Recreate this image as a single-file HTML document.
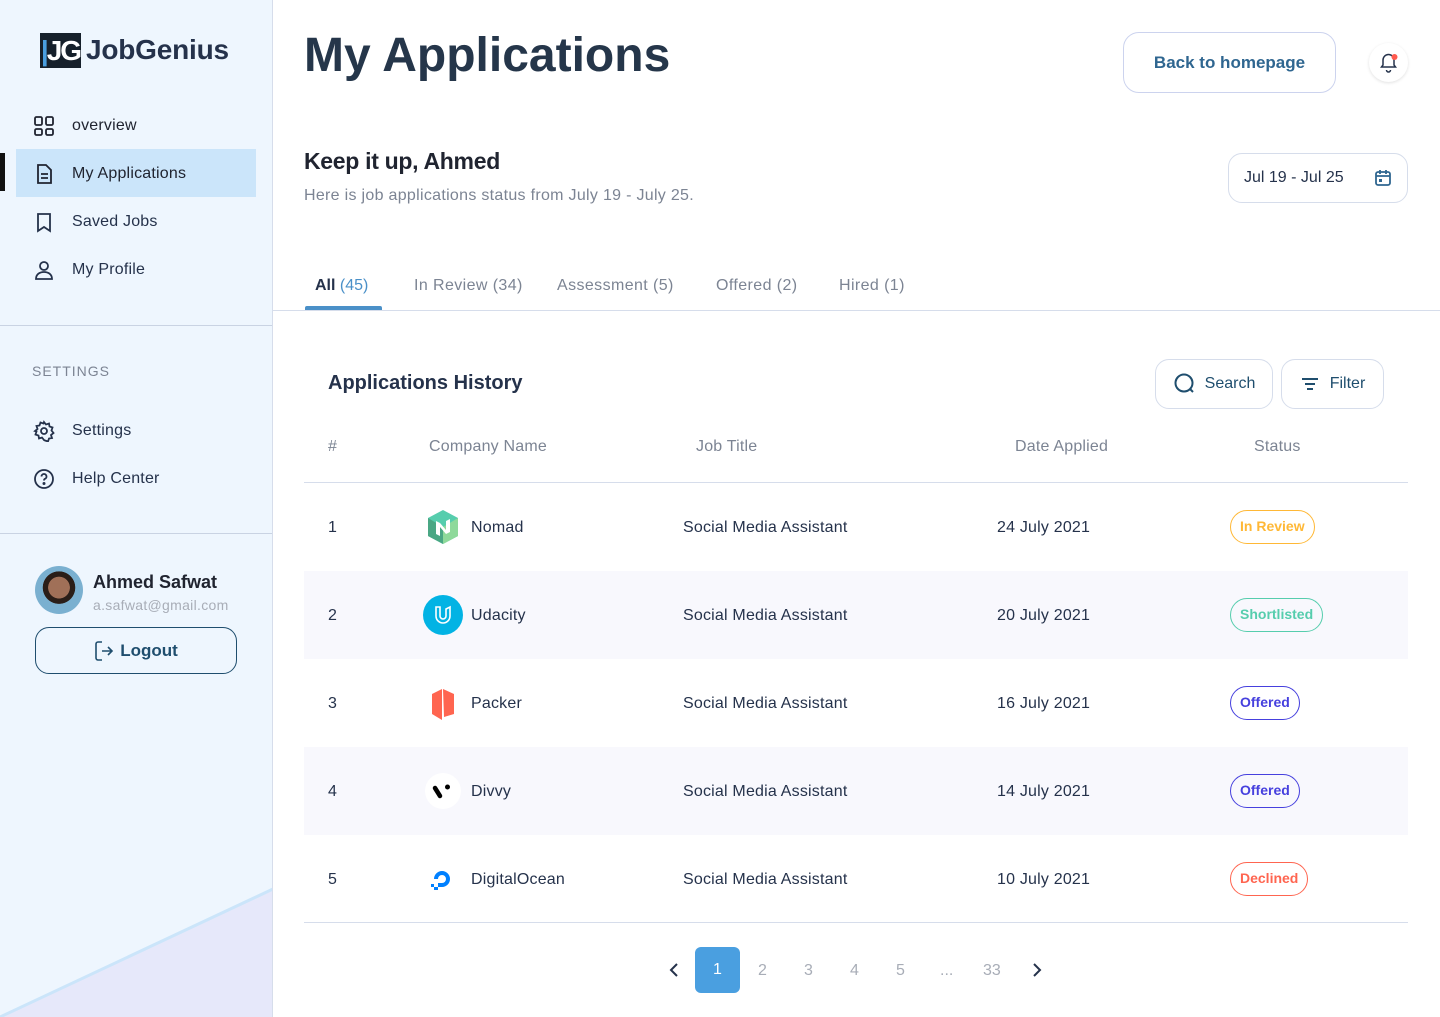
<!DOCTYPE html>
<html><head><meta charset="utf-8"><style>
*{margin:0;padding:0;box-sizing:border-box}
body{width:1440px;height:1017px;position:relative;overflow:hidden;background:#fff;font-family:"Liberation Sans",sans-serif;color:#25324b}
.a{position:absolute}
.side{left:0;top:0;width:273px;height:1017px;background:#eef6fe;border-right:1px solid #d6ddeb;overflow:hidden}
.nav{font-size:16px;color:#202430;display:flex;align-items:center;gap:17px;letter-spacing:0.2px}
.nav svg{width:22px;height:22px}
.hl{position:absolute;left:304px;width:1104px;height:88px;background:#f8f8fd}
.row{position:absolute;left:304px;width:1104px;height:88px;font-size:16px;color:#25324b;letter-spacing:0.2px}
.row span{position:absolute;top:36px}
.badge{position:absolute;top:27px;height:34px;border:1.5px solid;border-radius:17px;font-size:14px;font-weight:bold;padding:0 9px;line-height:31px;letter-spacing:0}
.th{position:absolute;top:438px;font-size:16px;color:#7c8493;letter-spacing:0.2px}
.pg{position:absolute;top:962px;font-size:16px;color:#a8adb7}
.tab{position:absolute;top:277px;font-size:16px;color:#7c8493;letter-spacing:0.4px}
</style></head><body>
<div class="a side">
  <div class="a" style="left:40px;top:33px;width:41px;height:35px;background:#16202b;color:#fff;font-weight:bold;font-size:28px;line-height:35px;text-align:center;letter-spacing:-2px"><span style="color:#4a9fe0">|</span>JG</div>
  <div class="a" style="left:86px;top:34px;font-size:28px;font-weight:bold;color:#25324b;letter-spacing:-0.2px">JobGenius</div>
  <div class="a" style="left:0;top:153px;width:5px;height:38px;background:#111"></div>
  <div class="a" style="left:16px;top:149px;width:240px;height:48px;background:#cbe5fa"></div>
  <div class="a nav" style="left:33px;top:115px"><svg viewBox="0 0 22 22" fill="none" stroke="#202430" stroke-width="1.8"><rect x="2" y="2" width="7" height="8" rx="1.5"/><rect x="13" y="2" width="7" height="8" rx="1.5"/><rect x="2" y="14" width="7" height="6" rx="1.5"/><rect x="13" y="14" width="7" height="6" rx="1.5"/></svg>overview</div>
  <div class="a nav" style="left:33px;top:163px"><svg viewBox="0 0 22 22" fill="none" stroke="#202430" stroke-width="1.8"><path d="M5 2h8l5 5v13H5z"/><path d="M8 11h7M8 15h7"/></svg>My Applications</div>
  <div class="a nav" style="left:33px;top:211px;color:#25324b"><svg viewBox="0 0 22 22" fill="none" stroke="#25324b" stroke-width="1.8"><path d="M5 3h12v17l-6-4-6 4z"/></svg>Saved Jobs</div>
  <div class="a nav" style="left:33px;top:259px;color:#25324b"><svg viewBox="0 0 22 22" fill="none" stroke="#25324b" stroke-width="1.8"><circle cx="11" cy="7" r="4"/><path d="M3 20c0-5 4-7 8-7s8 2 8 7z"/></svg>My Profile</div>
  <div class="a" style="left:0;top:325px;width:273px;height:1px;background:#c9d3e3"></div>
  <div class="a" style="left:32px;top:363px;font-size:14px;color:#7c8493;letter-spacing:1px">SETTINGS</div>
  <div class="a nav" style="left:33px;top:420px;color:#25324b"><svg viewBox="0 0 22 22" fill="none" stroke="#25324b" stroke-width="1.8"><circle cx="11" cy="11" r="3"/><path d="M11 2l2 2.5 3-1 .5 3 3 1-1 3 2 2.5-2.5 2 1 3-3 .5-1 3-3-1L11 20l-2-2.5-3 1-.5-3-3-1 1-3L2 11l2.5-2-1-3 3-.5 1-3 3 1z"/></svg>Settings</div>
  <div class="a nav" style="left:33px;top:468px;color:#25324b"><svg viewBox="0 0 22 22" fill="none" stroke="#25324b" stroke-width="1.8"><circle cx="11" cy="11" r="9"/><path d="M8.5 8.5a2.5 2.5 0 1 1 3.5 2.3c-.7.3-1 .8-1 1.7"/><circle cx="11" cy="15.5" r=".6" fill="#25324b"/></svg>Help Center</div>
  <div class="a" style="left:0;top:533px;width:273px;height:1px;background:#c9d3e3"></div>
  <div class="a" style="left:35px;top:566px;width:48px;height:48px;border-radius:50%;background:radial-gradient(circle at 50% 45%,#a07058 0 30%,#2a1e18 31% 45%,#7ab0d0 46%)"></div>
  <div class="a" style="left:93px;top:572px;font-size:18px;font-weight:bold;color:#202430">Ahmed Safwat</div>
  <div class="a" style="left:93px;top:597px;font-size:14px;color:#a8adb7;letter-spacing:0.3px">a.safwat@gmail.com</div>
  <div class="a" style="left:35px;top:627px;width:202px;height:47px;border:1.5px solid #1f4e6e;border-radius:14px;display:flex;align-items:center;justify-content:center;gap:6px;font-weight:bold;font-size:17px;color:#1f4e6e"><svg width="20" height="22" viewBox="0 0 20 22" fill="none" stroke="#1f4e6e" stroke-width="1.6"><path d="M8 2H4a2 2 0 0 0-2 2v14a2 2 0 0 0 2 2h4"/><path d="M8 11h10M14 7l4 4-4 4"/></svg>Logout</div>
  <svg class="a" style="left:0;top:880px" width="273" height="137"><polygon points="0,137 273,9 273,137" fill="#e6e8fa"/><line x1="0" y1="137" x2="273" y2="9" stroke="#cbe5fa" stroke-width="3"/></svg>
</div>

<div class="a" style="left:304px;top:28px;font-size:48px;font-weight:bold;color:#25364a;letter-spacing:0px">My Applications</div>
<div class="a" style="left:1123px;top:32px;width:213px;height:61px;border:1px solid #ccd3ee;border-radius:16px;text-align:center;line-height:59px;font-weight:bold;font-size:17px;color:#2f6690">Back to homepage</div>
<div class="a" style="left:1369px;top:43px;width:39px;height:39px;border-radius:50%;box-shadow:0 1px 3px rgba(0,0,0,.12)"><svg width="39" height="39" viewBox="0 0 39 39" fill="none" stroke="#25324b" stroke-width="1.5"><path d="M12.5 24h14l-1.5-2v-5a5.5 5.5 0 0 0-11 0v5z"/><path d="M17.5 27a2 2 0 0 0 4 0"/><circle cx="25.5" cy="14" r="3" fill="#ff5a4f" stroke="none"/></svg></div>
<div class="a" style="left:304px;top:148px;font-size:23px;font-weight:bold;color:#202430;letter-spacing:-0.3px">Keep it up, Ahmed</div>
<div class="a" style="left:304px;top:187px;font-size:16px;color:#7c8493;letter-spacing:0.3px">Here is job applications status from July 19 - July 25.</div>
<div class="a" style="left:1228px;top:153px;width:180px;height:50px;border:1px solid #d6ddeb;border-radius:14px"><span class="a" style="left:15px;top:15px;font-size:16px;color:#25324b">Jul 19 - Jul 25</span><svg class="a" style="left:144px;top:14px" width="20" height="20" viewBox="0 0 20 20" fill="none" stroke="#2f6690" stroke-width="1.8"><rect x="3" y="4" width="14" height="13" rx="2"/><path d="M3 8h14M7 2v4M13 2v4"/><rect x="6" y="11" width="3" height="3" fill="#2f6690" stroke="none"/></svg></div>

<div class="tab" style="left:315px;font-weight:bold;color:#25324b;letter-spacing:0">All <span style="color:#4a90c8;font-weight:normal">(45)</span></div>
<div class="tab" style="left:414px">In Review (34)</div>
<div class="tab" style="left:557px">Assessment (5)</div>
<div class="tab" style="left:716px">Offered (2)</div>
<div class="tab" style="left:839px">Hired (1)</div>
<div class="a" style="left:273px;top:310px;width:1167px;height:1px;background:#d6ddeb"></div>
<div class="a" style="left:305px;top:306px;width:77px;height:4px;background:#4a90c8;border-radius:2px 2px 0 0"></div>

<div class="a" style="left:328px;top:372px;font-size:20px;font-weight:bold;color:#25324b">Applications History</div>
<div class="a" style="left:1155px;top:359px;width:118px;height:50px;border:1px solid #d6ddeb;border-radius:14px;display:flex;align-items:center;justify-content:center;gap:8px;font-size:16px;color:#1f4e6e"><svg width="24" height="24" viewBox="0 0 24 24" fill="none" stroke="#1f4e6e" stroke-width="2"><circle cx="11" cy="11" r="8.5"/><path d="M17 17l3 3"/></svg>Search</div>
<div class="a" style="left:1281px;top:359px;width:103px;height:50px;border:1px solid #d6ddeb;border-radius:14px;display:flex;align-items:center;justify-content:center;gap:10px;font-size:16px;color:#1f4e6e"><svg width="20" height="20" viewBox="0 0 20 20" stroke="#1f4e6e" stroke-width="2"><path d="M2 5h16M5 10h10M7 15h6"/></svg>Filter</div>

<div class="th" style="left:328px">#</div>
<div class="th" style="left:429px">Company Name</div>
<div class="th" style="left:696px">Job Title</div>
<div class="th" style="left:1015px">Date Applied</div>
<div class="th" style="left:1254px">Status</div>
<div class="a" style="left:304px;top:482px;width:1104px;height:1px;background:#d6ddeb"></div>

<div class="row" style="top:483px"><span style="left:24px">1</span><svg class="a" style="left:122px;top:26px" width="34" height="36" viewBox="0 0 34 36"><polygon points="17,1 32,9 32,27 17,35 2,27 2,9" fill="#56cdad"/><polygon points="17,18 32,9 32,27 17,35" fill="#8ed99a"/><polygon points="2,9 17,18 17,35 2,27" fill="#4aa784"/><path d="M10 25V12l4 2 6 7V12l4-2v13l-4 2-6-7v9z" fill="#fff"/></svg><span style="left:167px">Nomad</span><span style="left:379px">Social Media Assistant</span><span style="left:693px">24 July 2021</span><div class="badge" style="left:926px;color:#ffb836;border-color:#ffb836">In Review</div></div>
<div class="hl" style="top:571px"></div>
<div class="row" style="top:571px"><span style="left:24px">2</span><div class="a" style="left:119px;top:24px;width:40px;height:40px;border-radius:50%;background:#02b3e4"><svg width="40" height="40" viewBox="0 0 40 40" fill="none" stroke="#fff" stroke-width="1.6"><path d="M13 12v9a7 7 0 0 0 14 0v-9l-4 2v7a3 3 0 0 1-6 0v-9z"/></svg></div><span style="left:167px">Udacity</span><span style="left:379px">Social Media Assistant</span><span style="left:693px">20 July 2021</span><div class="badge" style="left:926px;color:#56cdad;border-color:#56cdad">Shortlisted</div></div>
<div class="row" style="top:659px"><span style="left:24px">3</span><svg class="a" style="left:126px;top:28px" width="26" height="34" viewBox="0 0 26 34"><polygon points="2,7 12,2 12,33 2,27" fill="#ff6550"/><polygon points="13,2 24,7 24,27 14,30" fill="#ff6550"/></svg><span style="left:167px">Packer</span><span style="left:379px">Social Media Assistant</span><span style="left:693px">16 July 2021</span><div class="badge" style="left:926px;color:#4640de;border-color:#4640de">Offered</div></div>
<div class="hl" style="top:747px"></div>
<div class="row" style="top:747px"><span style="left:24px">4</span><div class="a" style="left:121px;top:26px;width:36px;height:36px;border-radius:50%;background:#fff"><svg width="36" height="36" viewBox="0 0 36 36"><path d="M10 15l5 8" stroke="#000" stroke-width="4.5" stroke-linecap="round"/><circle cx="22.5" cy="14" r="2.5" fill="#000"/></svg></div><span style="left:167px">Divvy</span><span style="left:379px">Social Media Assistant</span><span style="left:693px">14 July 2021</span><div class="badge" style="left:926px;color:#4640de;border-color:#4640de">Offered</div></div>
<div class="row" style="top:835px"><span style="left:24px">5</span><svg class="a" style="left:124px;top:30px" width="30" height="28" viewBox="0 0 30 28"><path d="M14 22a8 8 0 1 0-8-8h4a4 4 0 1 1 4 4z" fill="#0080ff"/><rect x="10" y="18" width="4" height="4" fill="#0080ff"/><rect x="6" y="22" width="4" height="3" fill="#0080ff"/><rect x="3" y="19" width="3" height="3" fill="#0080ff"/></svg><span style="left:167px">DigitalOcean</span><span style="left:379px">Social Media Assistant</span><span style="left:693px">10 July 2021</span><div class="badge" style="left:926px;color:#ff6550;border-color:#ff6550">Declined</div></div>
<div class="a" style="left:304px;top:922px;width:1104px;height:1px;background:#d6ddeb"></div>

<svg class="a" style="left:668px;top:962px" width="12" height="16" viewBox="0 0 12 16" fill="none" stroke="#25324b" stroke-width="2"><path d="M9 2L3 8l6 6"/></svg>
<div class="a" style="left:695px;top:947px;width:45px;height:46px;background:#4a9fe0;border-radius:6px;color:#fff;font-size:16px;text-align:center;line-height:46px">1</div>
<div class="pg" style="left:758px">2</div><div class="pg" style="left:804px">3</div><div class="pg" style="left:850px">4</div><div class="pg" style="left:896px">5</div><div class="pg" style="left:940px">...</div><div class="pg" style="left:983px">33</div>
<svg class="a" style="left:1031px;top:962px" width="12" height="16" viewBox="0 0 12 16" fill="none" stroke="#25324b" stroke-width="2"><path d="M3 2l6 6-6 6"/></svg>
</body></html>
